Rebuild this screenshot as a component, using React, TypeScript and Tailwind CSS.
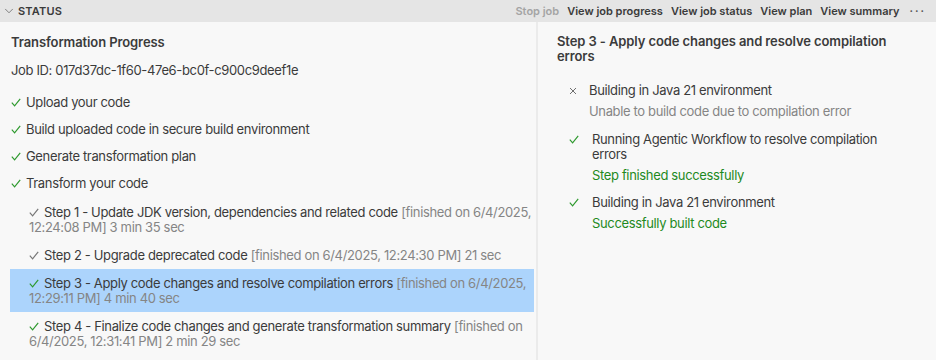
import { ChevronDown } from "lucide-react";

const TOP_STEPS = [
  "Upload your code",
  "Build uploaded code in secure build environment",
  "Generate transformation plan",
  "Transform your code",
];

const SUB_STEPS = [
  { title: "Step 1 - Update JDK version, dependencies and related code", meta: "[finished on 6/4/2025, 12:24:08 PM] 3 min 35 sec", green: false, active: false },
  { title: "Step 2 - Upgrade deprecated code", meta: "[finished on 6/4/2025, 12:24:30 PM] 21 sec", green: false, active: false },
  { title: "Step 3 - Apply code changes and resolve compilation errors", meta: "[finished on 6/4/2025, 12:29:11 PM] 4 min 40 sec", green: true, active: true },
  { title: "Step 4 - Finalize code changes and generate transformation summary", meta: "[finished on 6/4/2025, 12:31:41 PM] 2 min 29 sec", green: true, active: false },
];

const ACTIONS = ["View job progress", "View job status", "View plan", "View summary"];

function Check({ className }: { className: string }) {
  return (
    <svg width="10" height="9" viewBox="0 0 10 9" fill="none" className={`inline-block ${className}`}>
      <path d="M0.8 4.6 L3.6 7.8 L9.2 0.8" stroke="currentColor" strokeWidth="1.2" />
    </svg>
  );
}

function Cross() {
  return (
    <svg width="8" height="8" viewBox="0 0 8 8" fill="none" className="text-[#6f6f6f]">
      <path d="M1 1 L7 7 M7 1 L1 7" stroke="currentColor" strokeWidth="1" />
    </svg>
  );
}

export default function App() {
  return (
    <div className="w-[936px] h-[360px] flex flex-col bg-[#f8f8f8] text-[#3b3b3b] font-['Inter','Liberation_Sans',sans-serif] overflow-hidden">
      {/* Panel header */}
      <div className="h-[22px] shrink-0 flex items-center bg-[#e5e5e5] text-[11px] font-semibold">
        <ChevronDown size={14} strokeWidth={1.2} className="ml-[2px] text-[#555]" />
        <span className="ml-[2px] tracking-[0.2px]">STATUS</span>
        <div className="ml-auto flex items-center gap-[8px] pr-[10px]">
          <span className="text-[#a4a4a4]">Stop job</span>
          {ACTIONS.map((a) => (
            <span key={a}>{a}</span>
          ))}
          <span className="ml-[2px] tracking-[2px] text-[#555]">···</span>
        </div>
      </div>

      <div className="flex flex-1 min-h-0">
        {/* Left: progress */}
        <div className="w-[536px] shrink-0 flex flex-col pt-[12px] text-[13px] leading-[17px] tracking-[-0.35px]">
          <div className="pl-[11px] font-semibold tracking-[-0.1px]">Transformation Progress</div>
          <div className="pl-[11px] mt-[11px]">Job ID: 017d37dc-1f60-47e6-bc0f-c900c9deef1e</div>
          <div className="mt-[15px] flex flex-col gap-[10px] pl-[11px]">
            {TOP_STEPS.map((s) => (
              <div key={s} className="flex items-center gap-[5px]">
                <Check className="text-[#2f9a2f]" />
                <span>{s}</span>
              </div>
            ))}
          </div>
          <div className="mt-[6px] ml-[10px] w-[524px] flex flex-col">
            {SUB_STEPS.map((s) => (
              <div key={s.title} className={`pl-[19px] pt-[7px] pb-[6px] leading-[15px] ${s.active ? "bg-[#acd4fc]" : ""}`}>
                <Check className={`mr-[5px] align-[0px] ${s.green ? "text-[#2f9a2f]" : "text-[#777]"}`} />
                {s.title} <span className="text-[#858585]">{s.meta}</span>
              </div>
            ))}
          </div>
        </div>

        <div className="w-[2px] bg-[#ebebeb]" />

        {/* Right: step detail */}
        <div className="flex-1 pl-[19px] pr-[36px] pt-[12px] text-[13px] tracking-[-0.35px]">
          <div className="font-semibold leading-[15px] w-[340px] tracking-[-0.1px]">Step 3 - Apply code changes and resolve compilation errors</div>
          <div className="mt-[18px] ml-[12px] flex flex-col gap-[11px]">
            <div className="flex">
              <div className="w-[20px] shrink-0 h-[17px] flex items-center">
                <Cross />
              </div>
              <div className="flex flex-col gap-[4px] leading-[17px]">
                <span>Building in Java 21 environment</span>
                <span className="text-[#858585]">Unable to build code due to compilation error</span>
              </div>
            </div>
            <div className="flex pt-[1px]">
              <div className="w-[23px] shrink-0 h-[15px] flex items-center">
                <Check className="text-[#2f9a2f]" />
              </div>
              <div className="flex flex-col gap-[5px] leading-[17px] w-[300px]">
                <span className="leading-[15px]">Running Agentic Workflow to resolve compilation errors</span>
                <span className="text-[#1e8a1e]">Step finished successfully</span>
              </div>
            </div>
            <div className="flex -mt-[1px]">
              <div className="w-[23px] shrink-0 h-[17px] flex items-center">
                <Check className="text-[#2f9a2f]" />
              </div>
              <div className="flex flex-col gap-[4px] leading-[17px]">
                <span>Building in Java 21 environment</span>
                <span className="text-[#1e8a1e]">Successfully built code</span>
              </div>
            </div>
          </div>
        </div>
      </div>
    </div>
  );
}
